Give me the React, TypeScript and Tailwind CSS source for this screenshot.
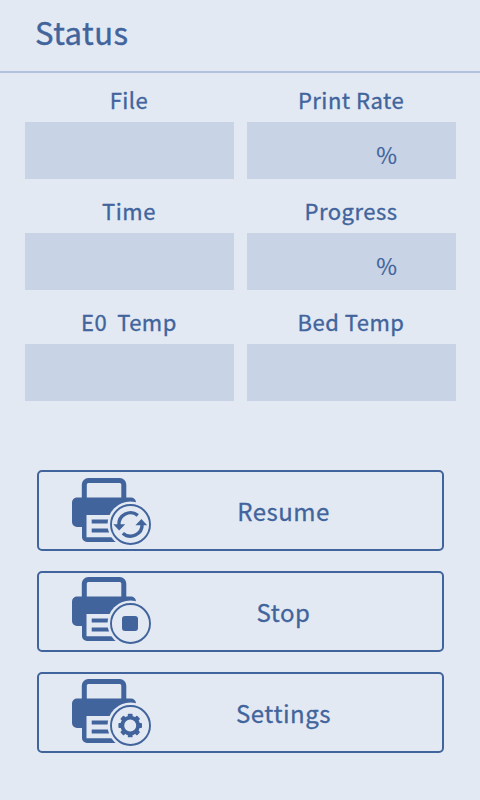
import type { ReactNode } from "react";

function PrinterIcon({ children }: { children: ReactNode }) {
  return (
    <svg width="80" height="68" viewBox="0 0 80 68" fill="none" className="text-[#41649c]">
      <path d="M12.300 21V6.500a4 4 0 0 1 4-4h31.500a4 4 0 0 1 4 4V21" stroke="currentColor" strokeWidth="5" />
      <path
        d="M5 19.500H59a5 5 0 0 1 5 5V49H54V64H15a5 5 0 0 1-5-5V49H5a5 5 0 0 1-5-5V24.500a5 5 0 0 1 5-5Z"
        fill="currentColor"
      />
      <path d="M14.500 37H54V59.300H14.500Z" fill="#e3e9f3" />
      <path d="M19.700 41.500H38V45.500H19.700ZM19.700 50.500H38V54.500H19.700Z" fill="currentColor" />
      <circle cx="58.500" cy="46.500" r="23" fill="#e3e9f3" />
      <circle cx="58.500" cy="46.500" r="19.500" stroke="currentColor" strokeWidth="1.900" />
      {children}
    </svg>
  );
}

function ResumeGlyph() {
  return (
    <>
      <path d="M46.900 47A11.600 11.600 0 0 1 65.800 37.400M70.100 46A11.600 11.600 0 0 1 50.800 55.200" stroke="currentColor" strokeWidth="3.400" />
      <path d="M41.300 46.200H53.200L47.200 52.400ZM75.200 47.300H63.400L69.400 41Z" fill="currentColor" />
    </>
  );
}

function StopGlyph() {
  return <rect x="50" y="39" width="16" height="15" rx="3" fill="currentColor" />;
}

const teeth = [0, 45, 90, 135, 180, 225, 270, 315];

function GearGlyph() {
  return (
    <g transform="translate(58.200 46.500)">
      <circle r="7.900" stroke="currentColor" strokeWidth="3.800" />
      {teeth.map((angle) => (
        <rect key={angle} x="-2.400" y="-11.800" width="4.800" height="4.500" rx="0.900" fill="currentColor" transform={`rotate(${angle})`} />
      ))}
    </g>
  );
}

function Field({ label, unit }: { label: ReactNode; unit?: string }) {
  return (
    <div className="flex h-[111px] flex-col">
      <div className="flex h-[49px] items-center justify-center whitespace-pre pr-px pt-[3px] text-[22px] leading-none tracking-[0.5px] [-webkit-text-stroke:0.35px_#41649c]">
        {label}
      </div>
      <div className="flex h-[57.400px] items-center justify-end bg-[#c8d3e5] pr-[59px] pt-[8px] text-[22.500px] leading-none [-webkit-text-stroke:0.15px_#41649c]">
        {unit}
      </div>
    </div>
  );
}

function ActionButton({ label, offset, children }: { label: string; offset: string; children: ReactNode }) {
  return (
    <button className="flex h-[81px] w-[407px] items-start rounded-[5px] border-2 border-[#41649c] pl-[33px]">
      <span className={offset}>
        <PrinterIcon>{children}</PrinterIcon>
      </span>
      <span className="ml-[30px] flex h-full w-[203px] items-center justify-center pt-px text-[24px] leading-none tracking-[0.5px] [-webkit-text-stroke:0.3px_#41649c]">
        {label}
      </span>
    </button>
  );
}

export default function App() {
  return (
    <main className="flex h-[800px] w-[480px] flex-col bg-[#e3e9f3] font-['Noto_Sans_CJK_SC',sans-serif] text-[#41649c]">
      <header className="flex h-[73px] items-center border-b-2 border-[#b0c2dc] pb-[9px] pl-[35px]">
        <h1 className="text-[31px] leading-none tracking-[0.5px] [-webkit-text-stroke:0.4px_#41649c]">Status</h1>
      </header>
      <section className="grid grid-cols-[209px_209px] gap-x-[13px] pl-[25px]">
        <Field label="File" />
        <Field label="Print Rate" unit="%" />
        <Field label="Time" />
        <Field label="Progress" unit="%" />
        <Field label={<span className="[word-spacing:-0.500px]">E0  Temp</span>} />
        <Field label="Bed Temp" />
      </section>
      <nav className="mt-[64px] flex flex-col gap-5 pl-[37px]">
        <ActionButton label="Resume" offset="pt-[6px]">
          <ResumeGlyph />
        </ActionButton>
        <ActionButton label="Stop" offset="pt-[4px]">
          <StopGlyph />
        </ActionButton>
        <ActionButton label="Settings" offset="pt-[5px]">
          <GearGlyph />
        </ActionButton>
      </nav>
    </main>
  );
}
